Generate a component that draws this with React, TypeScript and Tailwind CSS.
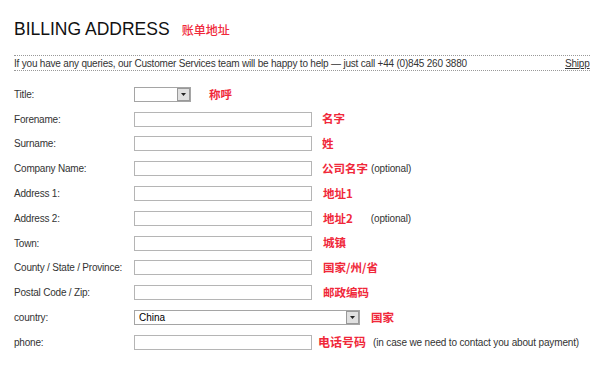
const cn = { fontFamily: '"Noto Sans CJK SC", sans-serif' }

function Field({ w = 'w-[178px]' }: { w?: string }) {
  return <div className={`${w} h-[15px] shrink-0 border border-[#b5b5b5] bg-white`} />
}

function Select({ w, value }: { w: string; value?: string }) {
  return (
    <div className={`${w} h-[15px] shrink-0 border border-[#a5a5a5] bg-white flex items-center justify-between`}>
      <span className="pl-1 text-[10px] leading-none text-black">{value}</span>
      <span className="h-[13px] w-[13px] bg-[#e0e0e0] border border-[#999] flex items-center justify-center">
        <svg width="5" height="3" viewBox="0 0 5 3">
          <path d="M0 0h5L2.5 3z" fill="#222" />
        </svg>
      </span>
    </div>
  )
}

function Row({ label, children }: { label: string; children: React.ReactNode }) {
  return (
    <div className="flex items-center h-[24.8px] whitespace-nowrap">
      <div className="w-[120px] shrink-0 text-[10px] tracking-[-0.2px] text-[#333]">{label}</div>
      {children}
    </div>
  )
}

function Cn({ t, className = '' }: { t: string; className?: string }) {
  return (
    <span style={cn} className={`shrink-0 font-bold text-[#f0283a] leading-none ${className}`}>
      {t}
    </span>
  )
}

function Opt({ t, className = '' }: { t: string; className?: string }) {
  return <span className={`shrink-0 text-[10px] tracking-[-0.15px] text-[#333] ${className}`}>{t}</span>
}

export default function App() {
  return (
    <div className="w-[590px] h-[368px] bg-white overflow-hidden pl-[14px]" style={{ fontFamily: '"Liberation Sans", Arial, sans-serif' }}>
      <div className="flex items-baseline pt-[21px] h-[55px]">
        <h1 className="text-[17.5px] text-[#111] leading-none">BILLING ADDRESS</h1>
        <Cn t="账单地址" className="ml-[12px] text-[12px] font-medium" />
      </div>
      <div className="border-t border-b border-dotted border-[#999] h-[16px] flex items-center text-[10px] tracking-[-0.2px] text-[#333] whitespace-nowrap">
        <span className="w-[551px] shrink-0">If you have any queries, our Customer Services team will be happy to help — just call +44 (0)845 260 3880</span>
        <span className="underline">Shipp</span>
      </div>
      <div className="pt-[11px]">
        <Row label="Title:">
          <Select w="w-[57px]" />
          <Cn t="称呼" className="ml-[18px] text-[11.5px]" />
        </Row>
        <Row label="Forename:">
          <Field />
          <Cn t="名字" className="ml-[10px] text-[11.5px]" />
        </Row>
        <Row label="Surname:">
          <Field />
          <Cn t="姓" className="ml-[10px] text-[11.5px]" />
        </Row>
        <Row label="Company Name:">
          <Field />
          <Cn t="公司名字" className="ml-[10px] text-[11.5px]" />
          <Opt t="(optional)" className="ml-[3px]" />
        </Row>
        <Row label="Address 1:">
          <Field />
          <Cn t="地址1" className="ml-[11px] text-[11.5px]" />
        </Row>
        <Row label="Address 2:">
          <Field />
          <Cn t="地址2" className="ml-[11px] text-[11.5px]" />
          <Opt t="(optional)" className="ml-[18px]" />
        </Row>
        <Row label="Town:">
          <Field />
          <Cn t="城镇" className="ml-[11px] text-[11.5px]" />
        </Row>
        <Row label="County / State / Province:">
          <Field />
          <Cn t="国家/州/省" className="ml-[11px] text-[11.5px]" />
        </Row>
        <Row label="Postal Code / Zip:">
          <Field />
          <Cn t="邮政编码" className="ml-[11px] text-[11.5px]" />
        </Row>
        <Row label="country:">
          <Select w="w-[226px]" value="China" />
          <Cn t="国家" className="ml-[11px] text-[11.5px]" />
        </Row>
        <Row label="phone:">
          <Field />
          <Cn t="电话号码" className="ml-[6px] text-[12px]" />
          <Opt t="(in case we need to contact you about payment)" className="ml-[7px]" />
        </Row>
      </div>
    </div>
  )
}
